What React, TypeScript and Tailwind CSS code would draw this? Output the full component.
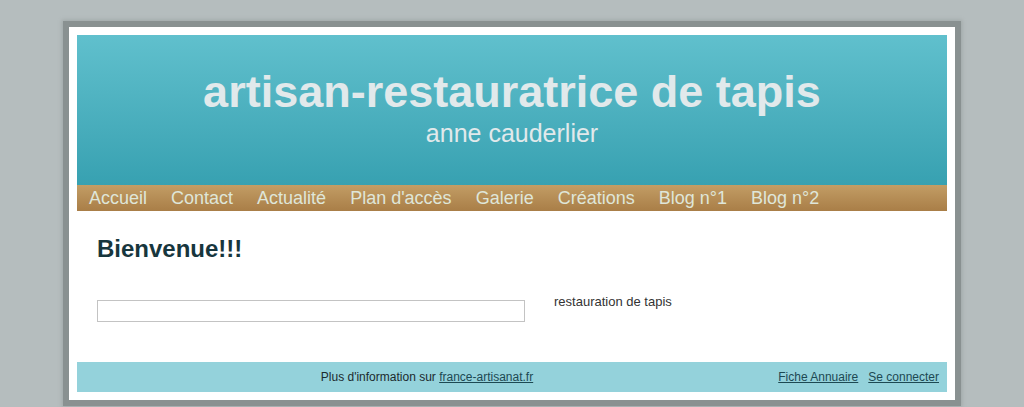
export default function App() {
  const nav = ['Accueil', 'Contact', 'Actualité', "Plan d'accès", 'Galerie', 'Créations', 'Blog n°1', 'Blog n°2'];

  return (
    <div className="min-h-[407px] bg-[#b5bdbe] pt-[21px] font-['Liberation_Sans',Arial,sans-serif]">
      {/* page frame */}
      <div className="mx-auto w-[898px] border-[6px] border-[#899191] shadow-[0_0_4px_1px_#9ea6a6] bg-white p-[8px]">
        {/* header */}
        <div className="h-[150px] bg-gradient-to-b from-[#60c0cd] to-[#37a1b1] pt-[34px] text-center text-[#e1e9eb]">
          <div className="text-[45px] leading-[45px] font-bold">artisan-restauratrice de tapis</div>
          <div className="mt-[7px] text-[25px] leading-[25px]">anne cauderlier</div>
        </div>

        {/* nav */}
        <div className="flex h-[26px] items-center bg-gradient-to-b from-[#c29d65] to-[#a97e47]">
          {nav.map((item) => (
            <span key={item} className="px-3 text-[18px] leading-[26px] text-[#dfe6d9]">
              {item}
            </span>
          ))}
        </div>

        {/* content */}
        <div className="h-[151px] px-[20px] pt-[24px]">
          <h1 className="text-[24px] leading-[28px] font-bold text-[#17363d]">Bienvenue!!!</h1>
          <div className="mt-[37px] flex items-start">
            <div className="h-[22px] w-[428px] border border-[#c3c3c3]"></div>
            <div className="ml-[29px] -mt-[8px] text-[13px] leading-[20px] text-[#333333]">restauration de tapis</div>
          </div>
        </div>

        {/* footer */}
        <div className="flex h-[30px] items-center bg-[#94d2db] text-[12px] leading-[14px]">
          <div className="w-[700px] text-center text-[#1c2a2e]">
            Plus d'information sur <a className="text-[#1d4953] underline">france-artisanat.fr</a>
          </div>
          <div className="flex flex-1 justify-end gap-[10px] pr-[8px]">
            <a className="text-[#1d4953] underline">Fiche Annuaire</a>
            <a className="text-[#1d4953] underline">Se connecter</a>
          </div>
        </div>
      </div>
    </div>
  );
}
